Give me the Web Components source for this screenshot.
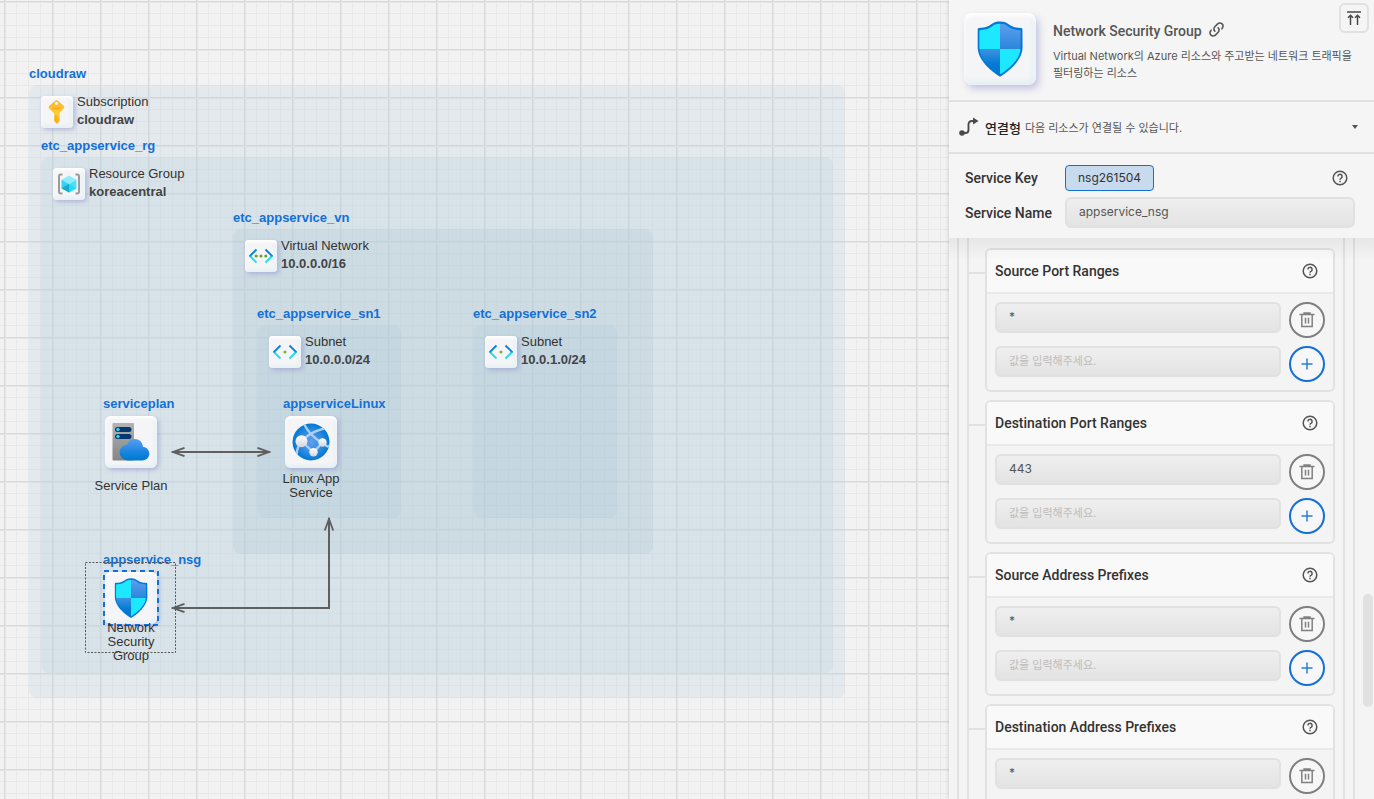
<!DOCTYPE html>
<html lang="ko">
<head>
<meta charset="utf-8">
<title>cloudraw</title>
<style>
  html, body { height: 100%; margin: 0; }
  body { font-family: "Inter", "Noto Sans CJK KR", sans-serif; font-size: 14px; color: #333; background: #f2f2f2; overflow: hidden; --heading: "Roboto", "Noto Sans CJK KR", sans-serif; }
</style>
</head>
<body>
<cloud-app>
  <diagram-canvas slot="canvas">
    <diagram-group icon="key" kind="Subscription" detail="cloudraw" style="left:29px;top:85px;width:816px;height:613px">cloudraw</diagram-group>
    <diagram-group icon="group" kind="Resource Group" detail="koreacentral" style="left:41px;top:157px;width:792px;height:516px;--fill:rgba(188,211,222,.28)">etc_appservice_rg</diagram-group>
    <diagram-group icon="vnet" kind="Virtual Network" detail="10.0.0.0/16" style="left:233px;top:229px;width:420px;height:325px;--fill:rgba(166,191,207,.2)">etc_appservice_vn</diagram-group>
    <diagram-group icon="subnet" kind="Subnet" detail="10.0.0.0/24" style="left:257px;top:325px;width:144px;height:193px;--fill:rgba(170,201,213,.22)">etc_appservice_sn1</diagram-group>
    <diagram-group icon="subnet" kind="Subnet" detail="10.0.1.0/24" style="left:473px;top:325px;width:144px;height:193px;--fill:rgba(170,201,213,.22)">etc_appservice_sn2</diagram-group>
    <diagram-links></diagram-links>
    <diagram-node icon="plan" kind="Service Plan" style="left:86px;top:396px;--gap:7px">serviceplan</diagram-node>
    <diagram-node icon="app" kind="Linux App Service" style="left:266px;top:396px">appserviceLinux</diagram-node>
    <diagram-node icon="shield" kind="Network Security Group" selected style="left:86px;top:552px;--gap:-7px">appservice_nsg</diagram-node>
  </diagram-canvas>
  <property-panel slot="panel">
    <panel-header slot="header" name="Network Security Group">Virtual Network의 Azure 리소스와 주고받는 네트워크 트래픽을 필터링하는 리소스</panel-header>
    <connect-row slot="header" label="연결형">다음 리소스가 연결될 수 있습니다.</connect-row>
    <service-fields slot="header" key-value="nsg261504" name-value="appservice_nsg"></service-fields>
    <rule-card value="*">Source Port Ranges</rule-card>
    <rule-card value="443">Destination Port Ranges</rule-card>
    <rule-card value="*">Source Address Prefixes</rule-card>
    <rule-card value="*">Destination Address Prefixes</rule-card>
  </property-panel>
</cloud-app>

<script>
const ICONS = {
  shield: `<svg viewBox="0 0 18 18"><defs><linearGradient id="a" x1="0" y1="0" x2="0" y2="1"><stop offset="0" stop-color="#5e9fee"/><stop offset="1" stop-color="#2a86dc"/></linearGradient><linearGradient id="b" x1="0" y1="0" x2="0" y2="1"><stop offset="0" stop-color="#3b93e0"/><stop offset=".6" stop-color="#0078d4"/></linearGradient><clipPath id="c"><path d="M15.4 8.5c0 4.2-5 7.5-6.1 8.2a.5.5 0 0 1-.5 0c-1.200-.7-6.200-4-6.200-8.200v-5c0-.2.2-.4.4-.4C6.900 3 6.100 1.200 9 1.200S11.100 3 15 3.100c.2 0 .4.200.4.4z"/></clipPath></defs><path fill="#0078d4" d="M16 8.440c0 4.570-5.530 8.250-6.730 9a.43.43 0 0 1-.46 0C7.610 16.700 2.080 13.010 2.080 8.440V2.940a.44.44 0 0 1 .43-.44C6.770 2.390 5.780.5 9 .5s2.230 1.890 6.530 2a.44.44 0 0 1 .43.44z"/><g clip-path="url(#c)"><path fill="#1ce8ff" d="M2 1h7v8H2zM9 9h7v8.500H9z"/><path fill="url(#a)" d="M9 1h7v8H9z"/><path fill="url(#b)" d="M2 9h7v8.500H2z"/></g></svg>`,
  key: `<svg viewBox="0 0 18 18"><defs><linearGradient id="a" x1="0" y1="0" x2="0" y2="1"><stop offset="0" stop-color="#feb52a"/><stop offset=".6" stop-color="#fbcf35"/><stop offset="1" stop-color="#fba823"/></linearGradient></defs><path fill="url(#a)" fill-rule="evenodd" d="M10 .9 13.800 4.200a1.700 1.700 0 0 1 0 2.500L11 9.800v6L9 18l-2.200-2.200V10L3.400 6.700a1.700 1.700 0 0 1 0-2.500L7.200.9a2 2 0 0 1 2.800 0ZM8.600 1.300a1.200 1.200 0 1 0 0 2.400 1.200 1.200 0 0 0 0-2.400Z"/><path fill="#f89d18" d="M5.600 5.800h6v1.100h-6zM7.700 11h1v4.500h-1z" opacity=".7"/></svg>`,
  group: `<svg viewBox="0 0 24 24"><path d="M5.500 2.500H4Q2 2.500 2 4.500v15q0 2 2 2h1.500M18.500 2.500H20q2 0 2 2v15q0 2-2 2h-1.500" fill="none" stroke="#9a9a9a" stroke-width="2"/><path fill="#8cebfc" d="m12 3.500 7.500 4.200L12 12 4.500 7.700z"/><path fill="#32d4f5" d="M4.500 7.700 12 12v8.500l-7.500-4.200z"/><path fill="#1aa9cd" d="M4.500 16.300 12 12v8.500z"/><path fill="#55dcf5" d="M19.500 7.700 12 12v8.500l7.500-4.200z"/><path fill="#18e0fa" d="M19.500 16.300 12 12v8.500z"/></svg>`,
  vnet: `<svg viewBox="0 0 24 24"><defs><linearGradient id="a" x1="0" y1="0" x2="0" y2="1"><stop offset=".45" stop-color="#0c85d8"/><stop offset=".6" stop-color="#27daf5"/></linearGradient></defs><path d="M7.500 5.500.900 12l6.600 6.500M16.500 5.500l6.600 6.500-6.600 6.500" fill="none" stroke="url(#a)" stroke-width="2"/><g fill="#64a62c"><circle cx="7.200" cy="12" r="1.600"/><circle cx="12" cy="12" r="1.600"/><circle cx="16.800" cy="12" r="1.600"/></g></svg>`,
  subnet: `<svg viewBox="0 0 24 24"><defs><linearGradient id="a" x1="0" y1="0" x2="0" y2="1"><stop offset=".45" stop-color="#0c85d8"/><stop offset=".6" stop-color="#27daf5"/></linearGradient></defs><path d="M7.500 5.500.900 12l6.600 6.500M16.500 5.500l6.600 6.500-6.600 6.500" fill="none" stroke="url(#a)" stroke-width="2"/><circle cx="12" cy="12" r="1.600" fill="#75b83a"/></svg>`,
  plan: `<svg viewBox="0 0 42 42"><defs><linearGradient id="a" x1="0" y1="0" x2="0" y2="1"><stop offset="0" stop-color="#b3b3b3"/><stop offset="1" stop-color="#858585"/></linearGradient><linearGradient id="b" x1="0" y1="0" x2="0" y2="1"><stop offset="0" stop-color="#5a9df0"/><stop offset=".7" stop-color="#1082dc"/><stop offset="1" stop-color="#0078d4"/></linearGradient></defs><rect x="2.500" y="2" width="21.500" height="37.500" rx="1" fill="url(#a)"/><rect x="5" y="6" width="16.500" height="5" rx="2.500" fill="#05386f"/><rect x="5" y="13" width="16.500" height="5" rx="2.500" fill="#05386f"/><circle cx="8" cy="8.500" r="1.700" fill="#32d4f5"/><circle cx="8" cy="15.500" r="1.700" fill="#32d4f5"/><path fill="url(#b)" d="M39.300 32.500c0-3.800-3-6.500-6.400-6.800C32.600 21.300 29.300 18 24.900 18c-3.600 0-6.500 2-7.700 5.500C12.900 24 9.600 27.200 9.600 31.200c0 4.600 3.900 8.200 8.500 8.200h14.200c4 0 7-3 7-6.900Z"/></svg>`,
  app: `<svg viewBox="0 0 42 42"><defs><radialGradient id="a"><stop offset="0" stop-color="#5ea0ef"/><stop offset=".5" stop-color="#3a8fe4"/><stop offset="1" stop-color="#0078d4"/></radialGradient><linearGradient id="b" x1="0" y1="0" x2="0" y2="1"><stop offset="0" stop-color="#fff"/><stop offset="1" stop-color="#d4d4dc"/></linearGradient><clipPath id="c"><circle cx="21" cy="21" r="18.500"/></clipPath></defs><circle cx="21" cy="21" r="18.500" fill="url(#a)"/><g clip-path="url(#c)" fill="none" stroke="#a9cff5" stroke-width="2.400"><path d="M11.500 20C20 12 28 8 38 7M14 3c4 8 10 14 18 19s5 4 8 2M11.500 20l12 11.500M11 21C7 27 6 31 7 36M23 32l9-10"/></g><circle cx="11.500" cy="20.300" r="6" fill="url(#b)"/><circle cx="32.500" cy="21.500" r="4.200" fill="url(#b)"/><circle cx="23.500" cy="31.300" r="4.200" fill="url(#b)"/></svg>`,
  help: `<svg viewBox="0 0 18 18" fill="none" stroke="#555" stroke-width="1.500"><circle cx="9" cy="9" r="6.800"/><path d="M6.900 7.400a2.100 2.100 0 1 1 3.300 1.700C9.400 9.600 9 9.900 9 10.700M9 11.800v1.500"/></svg>`,
  trash: `<svg viewBox="0 0 18 18" fill="none" stroke="#808080" stroke-width="1.500"><path d="M1.500 3.600h15M6 3V1.900h6V3M3.800 3.600v12h10.400v-12M7.500 6.800v5.600M10.500 6.800v5.600"/></svg>`,
  plus: `<svg viewBox="0 0 18 18" fill="none" stroke="#2a7cdb" stroke-width="1.500"><path d="M9 3.500v11M3.500 9h11"/></svg>`,
  link: `<svg viewBox="0 0 24 24" fill="#555"><path d="M10.590 13.410C11 13.800 11 14.440 10.590 14.830C10.200 15.220 9.560 15.220 9.170 14.830C7.220 12.880 7.220 9.710 9.170 7.760L12.710 4.220C14.660 2.270 17.830 2.270 19.780 4.220C21.730 6.170 21.730 9.340 19.780 11.290L18.290 12.780C18.300 11.960 18.170 11.140 17.890 10.360L18.360 9.880C19.540 8.710 19.540 6.810 18.360 5.640C17.190 4.460 15.290 4.460 14.120 5.640L10.590 9.170C9.410 10.340 9.410 12.240 10.590 13.410M13.410 9.170C13.800 8.780 14.440 8.780 14.830 9.170C16.780 11.120 16.780 14.290 14.830 16.240L11.290 19.780C9.340 21.730 6.170 21.730 4.220 19.780C2.270 17.830 2.270 14.660 4.220 12.710L5.710 11.220C5.700 12.040 5.830 12.860 6.110 13.650L5.640 14.120C4.460 15.290 4.460 17.190 5.640 18.360C6.810 19.540 8.710 19.540 9.880 18.360L13.410 14.830C14.590 13.660 14.590 11.760 13.410 10.590C13 10.200 13 9.560 13.410 9.170Z"/></svg>`,
  route: `<svg viewBox="0 0 20 20"><circle cx="3" cy="16" r="2.800" fill="#4a4a4a"/><path d="M4 16h2.500Q9.500 16 9.500 13V7.500Q9.500 4 13 4H15" fill="none" stroke="#4a4a4a" stroke-width="1.900"/><path fill="#4a4a4a" d="m14 .5 5.500 3.500L14 7.500z"/></svg>`,
  top: `<svg viewBox="0 0 18 18" fill="none" stroke="#4a4a4a" stroke-width="1.500"><path d="M2 3h14M5.500 16V6.500M12.500 16V6.500M3 8.800 5.500 6.300 8 8.800M10 8.800l2.500-2.500L15 8.800"/></svg>`
};

class Base extends HTMLElement {
  constructor() { super(); this.attachShadow({ mode: 'open' }); }
  connectedCallback() { this.shadowRoot.innerHTML = this.view(); }
}
const define = (name, view) => customElements.define(name, class extends Base { view() { return view(this); } });

define('ui-icon', el => `<style>
  :host { display: block; width: var(--icon, 18px); height: var(--icon, 18px); flex: none; }
  svg { display: block; width: 100%; height: 100%; }
</style>${ICONS[el.getAttribute('name')]}`);

define('icon-tile', el => `<style>
  :host { display: grid; place-items: center; box-sizing: border-box; flex: none;
    width: var(--tile, 32px); height: var(--tile, 32px); border-radius: var(--round, 4px); background: #f5f5f7;
    box-shadow: inset 0 2px 3px #fff, inset -2px -2px 4px #e2eff3, 2px 2px 4px rgba(140,140,205,.5); }
</style><ui-icon name="${el.getAttribute('name')}"></ui-icon>`);

define('cloud-app', () => `<style>
  :host { display: flex; height: 100vh; }
  ::slotted([slot=canvas]) { flex: 1; min-width: 0; }
  ::slotted([slot=panel]) { flex: none; width: 425px; }
</style><slot name="canvas"></slot><slot name="panel"></slot>`);

define('diagram-canvas', () => `<style>
  :host { display: block; position: relative; overflow: hidden;
    font: 13px/18px "Liberation Sans", Arial, sans-serif; background-color: #f2f2f2;
    background-image:
      linear-gradient(90deg, #dadada 1px, #e6e6e6 1px 2px, transparent 2px),
      linear-gradient(#dadada 1px, #e6e6e6 1px 2px, transparent 2px),
      linear-gradient(90deg, #e8e8e8 1px, transparent 1px),
      linear-gradient(#e8e8e8 1px, transparent 1px);
    background-size: 48px 48px, 48px 48px, 12px 12px, 12px 12px;
    background-position: 4px 0, 0 1px, 4px 0, 0 1px; }
</style><slot></slot>`);

define('diagram-group', el => `<style>
  :host { display: block; position: absolute; box-sizing: border-box; border-radius: 8px;
    padding: 11px 12px; background: var(--fill, rgba(185,208,222,.25)); }
  .label { position: absolute; left: 0; bottom: 100%; margin-bottom: 2px; font-weight: 700; color: #1270d8; white-space: nowrap; }
  .head { display: flex; gap: 4px; --icon: 24px; }
  .text { margin-top: -3px; white-space: nowrap; }
  b { display: block; color: #444; }
</style><div class="label"><slot></slot></div>
<div class="head"><icon-tile name="${el.getAttribute('icon')}"></icon-tile>
<div class="text">${el.getAttribute('kind')}<b>${el.getAttribute('detail')}</b></div></div>`);

define('diagram-node', el => `<style>
  :host { display: flex; flex-direction: column; align-items: center; position: absolute; width: 90px; }
  .label { align-self: flex-start; margin-left: 17px; line-height: 16px; font-weight: 700; color: #1270d8; white-space: nowrap; }
  icon-tile { --tile: 52px; --icon: 42px; --round: 6px; margin-top: 4px; }
  .kind { width: 76px; margin-top: calc(4px + var(--gap, 0px)); line-height: 14px; text-align: center; position: relative; }
  .frame { display: none; }
  :host([selected]) .frame { display: block; position: absolute; left: -1px; top: 10px; width: 91px; height: 91px; overflow: visible; fill: none; }
</style><svg class="frame"><rect x="0.500" y="0.500" width="90" height="90" stroke="#555" stroke-dasharray="2 1.500"/><rect x="19" y="9" width="54" height="54" stroke="#1270d8" stroke-width="2" stroke-dasharray="5 4"/></svg>
<div class="label"><slot></slot></div><icon-tile name="${el.getAttribute('icon')}"></icon-tile>
<div class="kind">${el.getAttribute('kind')}</div>`);

define('diagram-links', () => `<style>
  :host { display: block; position: absolute; inset: 0; }
  svg { display: block; width: 100%; height: 100%; }
</style><svg fill="none" stroke="#5f5f5f" stroke-width="2"><defs>
<marker id="m" viewBox="0 0 14 10" markerWidth="14" markerHeight="10" refX="13" refY="5" markerUnits="userSpaceOnUse" orient="auto-start-reverse"><path d="M.5.800 12 5 .5 9.200" fill="none" stroke="#5f5f5f" stroke-width="1.800"/></marker></defs>
<path d="M172 452H270" marker-start="url(#m)" marker-end="url(#m)"/>
<path d="M172 608H329V518" marker-start="url(#m)" marker-end="url(#m)"/></svg>`);

define('property-panel', () => `<style>
  :host { display: flex; flex-direction: column; position: relative; z-index: 1; background: #f5f5f5; box-shadow: 0 0 4px rgba(0,0,0,.2); }
  .scroll { position: relative; flex: 1; min-height: 0; overflow: hidden; background: #f4f4f4; }
  .scroll::before { content: ""; position: absolute; z-index: 1; inset: 0 0 auto; height: 22px; background: linear-gradient(rgba(0,0,0,.055), transparent); }
  .outer { margin: 0 19px 0 8px; padding: 0 8px; border: solid #e1e1e1; border-width: 0 2px; }
  .inner { display: flex; flex-direction: column; gap: 8px; padding: 10px 8px 40px 16px; border: solid #e1e1e1; border-width: 0 2px; }
  .thumb { position: absolute; right: 1px; top: 356px; width: 10px; height: 113px; border-radius: 5px; background: #e1e1e1; }
</style><slot name="header"></slot>
<div class="scroll"><div class="outer"><div class="inner"><slot></slot></div></div><div class="thumb"></div></div>`);

define('panel-header', el => `<style>
  :host { display: flex; gap: 17px; padding: 13px 14px 15px 15px; border-bottom: 2px solid #e1e1e1; position: relative; color: #555; }
  icon-tile { --tile: 72px; --icon: 58px; --round: 8px; box-shadow: inset 0 3px 5px #fff, inset -3px -3px 6px #e0eef2, 3px 4px 7px rgba(140,135,205,.45); }
  .text { flex: 1; }
  h1 { display: flex; align-items: center; gap: 5px; margin: 8px 0 7px; font: 500 14px/20px var(--heading); }
  p { margin: 0; font-size: 11px; line-height: 17px; }
  a { display: block; --icon: 19px; margin-top: -4px; }
  button { position: absolute; top: 3px; right: 5px; display: grid; place-items: center; width: 30px; height: 30px; padding: 0; border: 2px solid #e1e1e1; border-radius: 6px; background: #f5f5f5; }
</style><icon-tile name="shield"></icon-tile>
<div class="text"><h1>${el.getAttribute('name')}<a href="#docs" aria-label="문서"><ui-icon name="link"></ui-icon></a></h1><p><slot></slot></p></div>
<button type="button" aria-label="맨 위로"><ui-icon name="top"></ui-icon></button>`);

define('connect-row', el => `<style>
  :host { display: block; border-bottom: 2px solid #e1e1e1; }
  button { display: flex; align-items: center; gap: 4px; box-sizing: border-box; width: 100%; height: 50px; padding: 0 16px 0 10px; border: 0; background: none; font: inherit; font-size: 11px; color: #555; text-align: left; }
  b { font-size: 13px; font-weight: 500; color: #222; }
  ui-icon { --icon: 20px; margin-right: 2px; }
  span { flex: 1; }
  i { border: 3px solid transparent; border-top: 4px solid #555; border-bottom: 0; }
</style><button type="button"><ui-icon name="route"></ui-icon><b>${el.getAttribute('label')}</b><span><slot></slot></span><i></i></button>`);

const FIELD = `input { box-sizing: border-box; width: 100%; height: 31px; margin: 0; padding: 0 12px 2px; border: 2px solid #e1e1e1; border-radius: 6px; background: linear-gradient(#efefef, #e3e3e3); font: inherit; font-size: 12px; color: #555; }
  input::placeholder { color: #bdbdbd; opacity: 1; font-size: 11px; }`;

define('service-fields', el => `<style>
  :host { display: grid; grid-template-columns: 100px 1fr; gap: 6px 0; align-items: center; padding: 11px 19px 10px 16px; }
  label { font: 500 14px/20px var(--heading); }
  ${FIELD}
  .key { display: flex; justify-content: space-between; align-items: center; padding-right: 6px; }
  output { box-sizing: border-box; height: 26px; padding: 0 12px; border: 1px solid #1270d8; border-radius: 4px; background: #c8daee; font-size: 12px; line-height: 24px; }
</style><label for="k">Service Key</label>
<div class="key"><output id="k">${el.getAttribute('key-value')}</output><ui-icon name="help"></ui-icon></div>
<label for="n">Service Name</label><input id="n" value="${el.getAttribute('name-value')}">`);

define('rule-card', el => `<style>
  :host { display: block; position: relative; border: 2px solid #e1e1e1; border-radius: 6px; }
  :host::before { content: ""; position: absolute; right: 100%; top: 22px; width: 18px; height: 2px; background: #e1e1e1; }
  header { display: flex; justify-content: space-between; align-items: center; height: 42px; padding: 0 14px 0 8px; border-bottom: 2px solid #e9e9e9; border-radius: 4px 4px 0 0; background: #f9f9f9; font: 500 14px/20px var(--heading); }
  .body { display: flex; flex-direction: column; gap: 8px; padding: 8px; }
  .row { display: flex; gap: 8px; }
  ${FIELD}
  button { display: grid; place-items: center; flex: none; box-sizing: border-box; width: 36px; height: 36px; padding: 0; border: 2px solid #808080; border-radius: 50%; background: #f7f7f7; }
  button.add { border-color: #1270d8; }
</style><header><label for="v"><slot></slot></label><ui-icon name="help"></ui-icon></header>
<div class="body"><div class="row"><input id="v" value="${el.getAttribute('value')}"><button type="button" aria-label="삭제"><ui-icon name="trash"></ui-icon></button></div>
<div class="row"><input aria-label="새 값" placeholder="값을 입력해주세요."><button type="button" class="add" aria-label="추가"><ui-icon name="plus"></ui-icon></button></div></div>`);
</script>
</body>
</html>
